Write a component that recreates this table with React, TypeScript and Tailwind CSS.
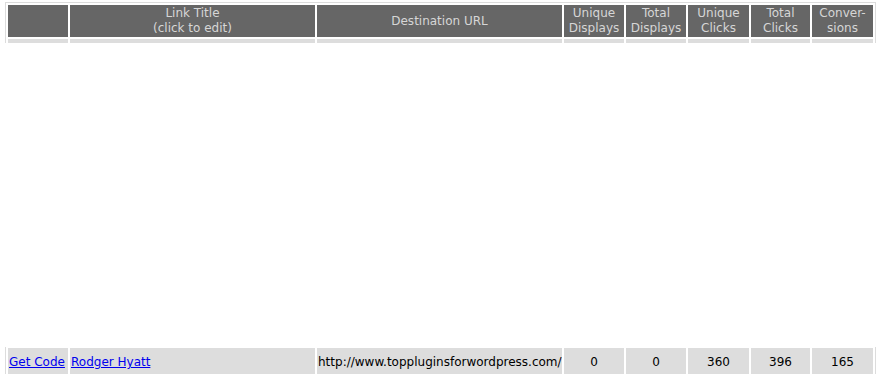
const cols = 'grid grid-cols-[60px_245px_245px_60px_60px_61px_59px_61px] gap-[2px]';

const headers = [
  '',
  'Link Title\n(click to edit)',
  'Destination URL',
  'Unique\nDisplays',
  'Total\nDisplays',
  'Unique\nClicks',
  'Total\nClicks',
  'Conver-\nsions',
];

const row = {
  url: 'http://www.toppluginsforwordpress.com/',
  uniqueDisplays: 0,
  totalDisplays: 0,
  uniqueClicks: 360,
  totalClicks: 396,
  conversions: 165,
};

export default function App() {
  return (
    <div className="h-[374px] w-[888px] overflow-hidden bg-white text-[12px] font-['DejaVu_Sans',Verdana,sans-serif]">
      {/* header block */}
      <div className="ml-[5px] mt-[2px] w-[871px] border-x border-t border-[#dcdcdc] p-[2px] pb-0">
        <div className={cols}>
          {headers.map((h, i) => (
            <div
              key={i}
              className="flex h-[32px] items-center justify-center whitespace-pre-line bg-[#666666] text-center leading-[15px] text-[#d6d6d6]"
            >
              {h}
            </div>
          ))}
        </div>
        <div className={`${cols} mt-[2px]`}>
          {headers.map((_, i) => (
            <div key={i} className="h-[4px] bg-[#dddddd]" />
          ))}
        </div>
      </div>

      <div className="h-[304px]" />

      {/* data row */}
      <div className="ml-[5px] w-[871px] border-x border-[#dcdcdc] px-[2px] pt-[1px]">
        <div className={`${cols} text-black`}>
          <div className="flex h-[28px] items-center bg-[#dddddd] pl-[1px]">
            <a href="#" className="text-[#0000ee] underline">Get Code</a>
          </div>
          <div className="flex h-[28px] items-center bg-[#dddddd] pl-[1px]">
            <a href="#" className="text-[#0000ee] underline">Rodger Hyatt</a>
          </div>
          <div className="flex h-[28px] items-center overflow-hidden whitespace-nowrap bg-[#dddddd] pl-[1px]">
            {row.url}
          </div>
          {[row.uniqueDisplays, row.totalDisplays, row.uniqueClicks, row.totalClicks, row.conversions].map((n, i) => (
            <div key={i} className="flex h-[28px] items-center justify-center bg-[#dddddd]">
              {n}
            </div>
          ))}
        </div>
      </div>
    </div>
  );
}
